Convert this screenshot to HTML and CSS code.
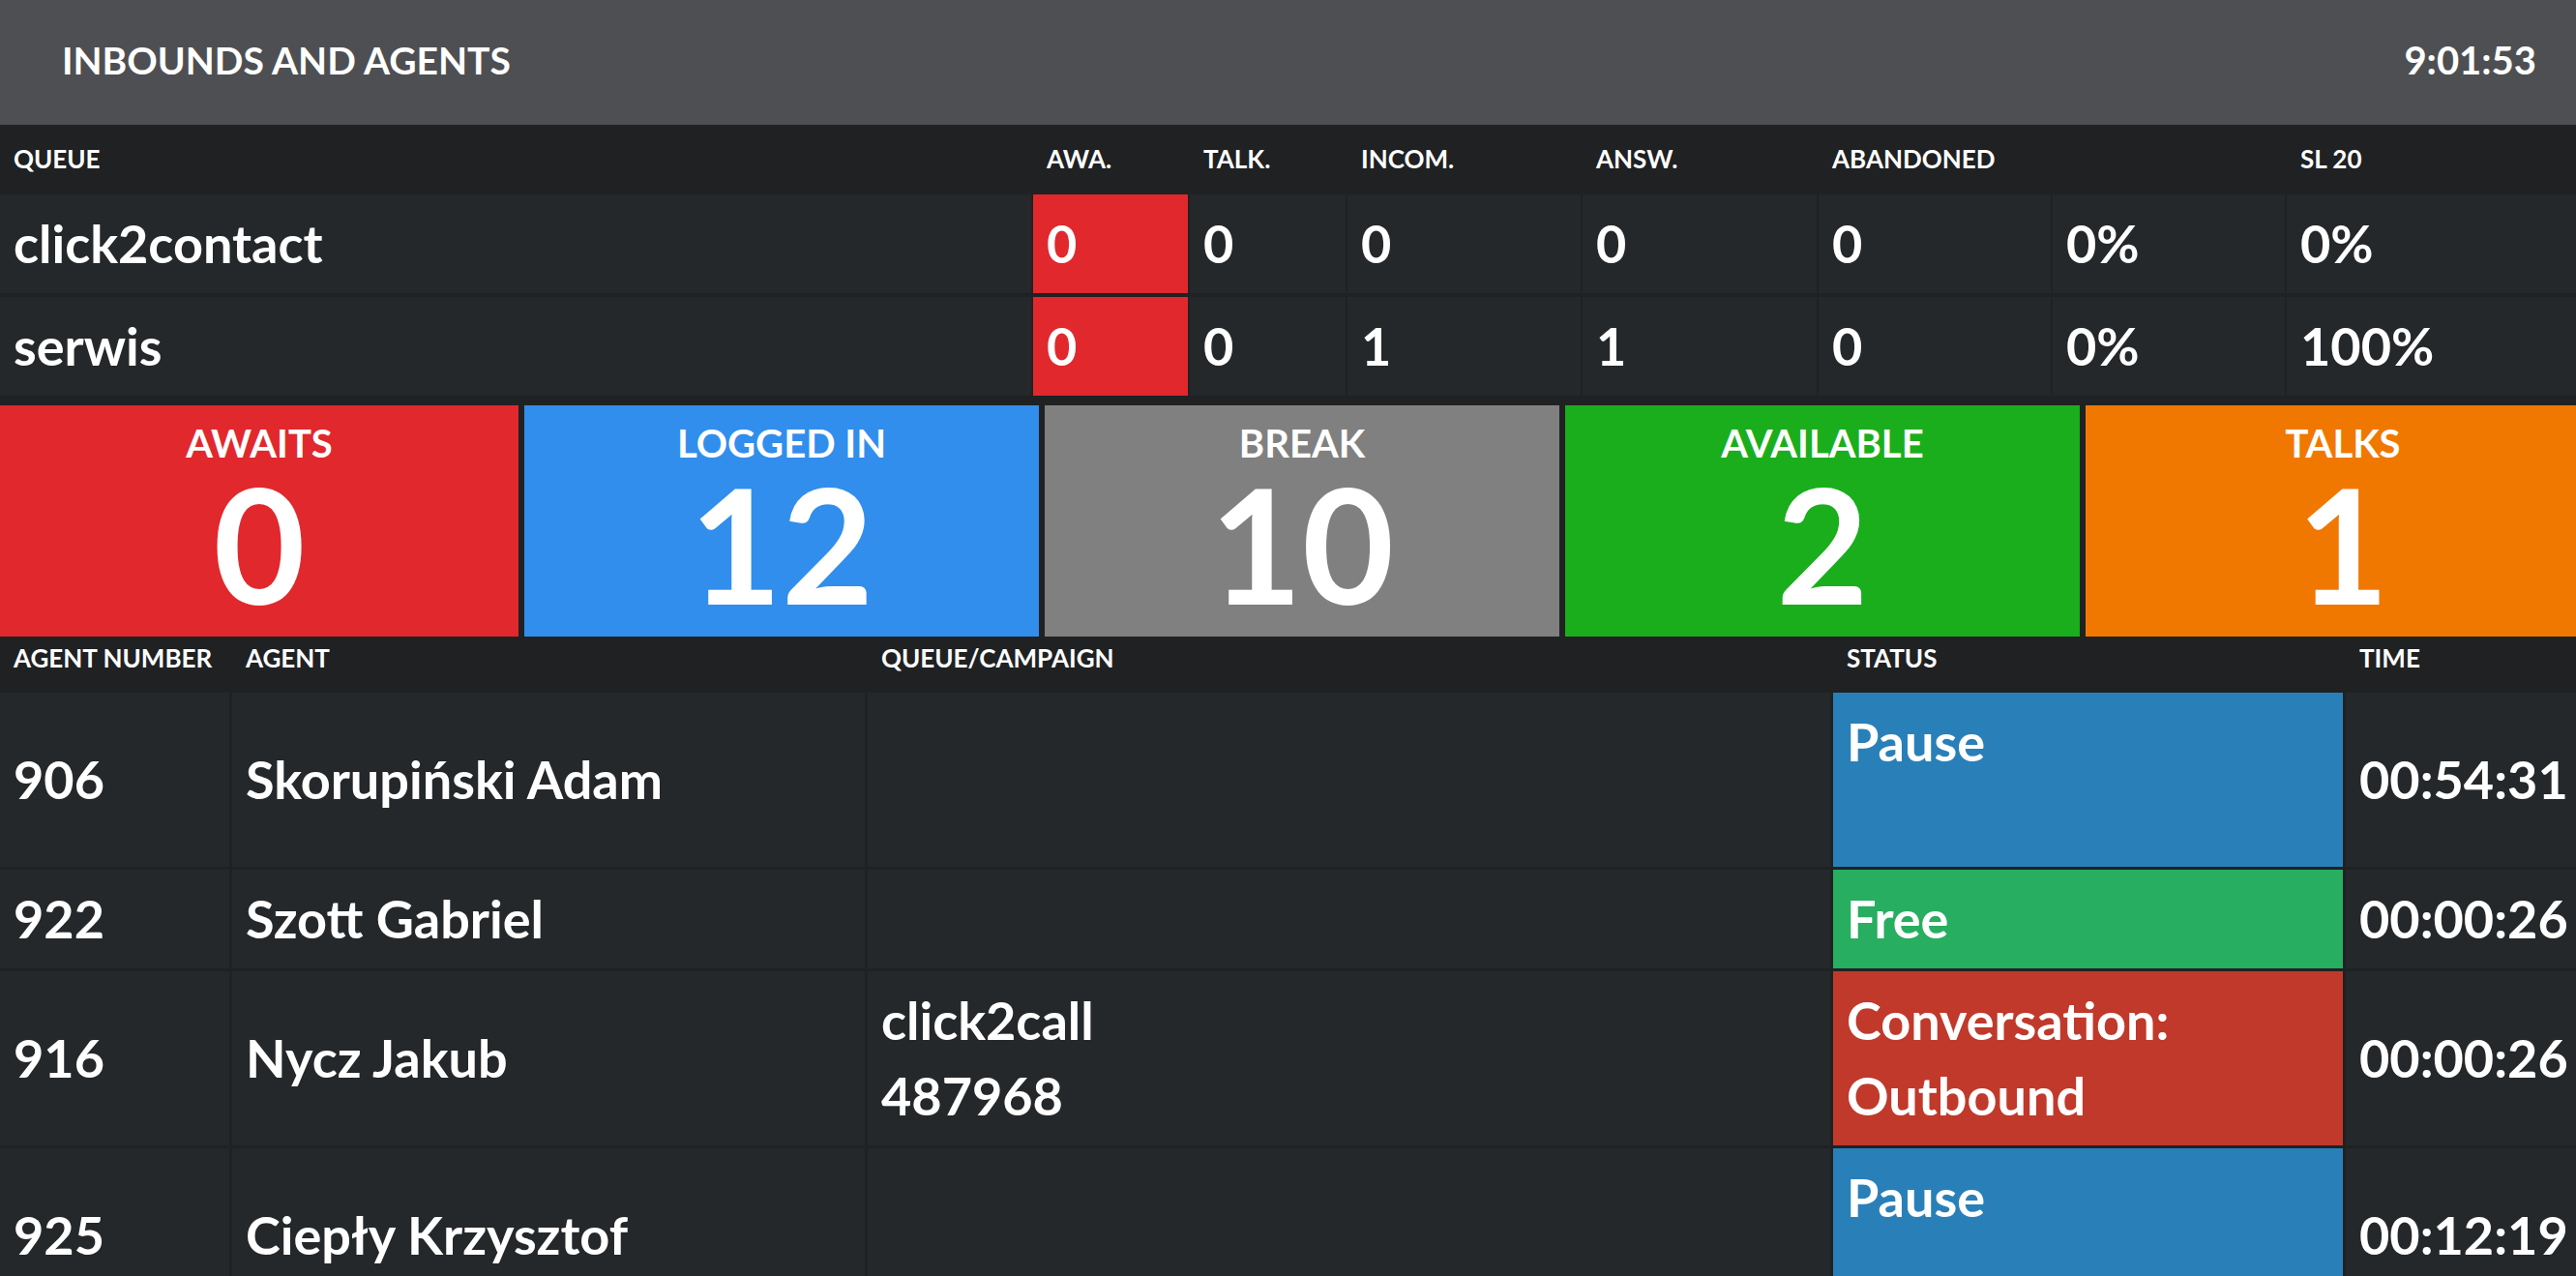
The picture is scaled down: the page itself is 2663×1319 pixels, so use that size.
FILE: index.html
```html
<!DOCTYPE html>
<html lang="en">
<head>
    <meta charset="UTF-8">
    <meta name="viewport" content="width=device-width, initial-scale=1.0">
    <title>Inbounds and Agents</title>
    <link rel="stylesheet" href="styles.css">
</head>
<body>
    <div class="topbar">
        <div class="title">INBOUNDS AND AGENTS</div>
        <div class="clock">9:01:53</div>
    </div>

    <!-- queues -->
    <div class="queue-table">
        <div class="th">QUEUE</div>
        <div class="th">AWA.</div>
        <div class="th">TALK.</div>
        <div class="th">INCOM.</div>
        <div class="th">ANSW.</div>
        <div class="th">ABANDONED</div>
        <div class="th"></div>
        <div class="th">SL 20</div>

        <div class="td">click2contact</div>
        <div class="td alert">0</div>
        <div class="td">0</div>
        <div class="td">0</div>
        <div class="td">0</div>
        <div class="td">0</div>
        <div class="td">0%</div>
        <div class="td">0%</div>

        <div class="td">serwis</div>
        <div class="td alert">0</div>
        <div class="td">0</div>
        <div class="td">1</div>
        <div class="td">1</div>
        <div class="td">0</div>
        <div class="td">0%</div>
        <div class="td">100%</div>
    </div>

    <!-- counters -->
    <div class="counters">
        <div class="counter red">
            <div class="counter-label">AWAITS</div>
            <div class="counter-value">0</div>
        </div>
        <div class="counter blue">
            <div class="counter-label">LOGGED IN</div>
            <div class="counter-value">12</div>
        </div>
        <div class="counter gray">
            <div class="counter-label">BREAK</div>
            <div class="counter-value">10</div>
        </div>
        <div class="counter green">
            <div class="counter-label">AVAILABLE</div>
            <div class="counter-value">2</div>
        </div>
        <div class="counter orange">
            <div class="counter-label">TALKS</div>
            <div class="counter-value">1</div>
        </div>
    </div>

    <!-- agents -->
    <div class="agent-table">
        <div class="th">AGENT NUMBER</div>
        <div class="th">AGENT</div>
        <div class="th">QUEUE/CAMPAIGN</div>
        <div class="th">STATUS</div>
        <div class="th">TIME</div>

        <div class="td mid">906</div>
        <div class="td mid">Skorupiński Adam</div>
        <div class="td"></div>
        <div class="td status pause"><div>Pause</div><div class="reason"></div></div>
        <div class="td mid">00:54:31</div>

        <div class="td mid">922</div>
        <div class="td mid">Szott Gabriel</div>
        <div class="td"></div>
        <div class="td status free"><div>Free</div></div>
        <div class="td mid">00:00:26</div>

        <div class="td mid">916</div>
        <div class="td mid">Nycz Jakub</div>
        <div class="td"><div>click2call</div><div>487968</div></div>
        <div class="td status talk"><div>Conversation:</div><div>Outbound</div></div>
        <div class="td mid">00:00:26</div>

        <div class="td mid">925</div>
        <div class="td mid">Ciepły Krzysztof</div>
        <div class="td"></div>
        <div class="td status pause"><div>Pause</div><div class="reason"></div></div>
        <div class="td mid">00:12:19</div>
    </div>
</body>
</html>
```

FILE: styles.css
```css
body {
    font-family: Lato, "Open Sans", sans-serif;
    font-weight: 700;
    background-color: #1f2123;
    color: white;
    margin: 0;
    padding: 0;
    height: 100vh;
    overflow: hidden;
}

.topbar {
    height: 129px;
    box-sizing: border-box;
    background-color: #4e4f52;
    display: flex;
    align-items: center;
    justify-content: space-between;
    padding: 0 41px 5px 64px;
    font-size: 40px;
    line-height: 48px;
}

.title {
    font-size: 39px;
}

.th {
    font-size: 26px;
    line-height: 31px;
    padding: 0 14px;
    white-space: nowrap;
}

.td {
    background-color: #25282a;
    font-size: 54px;
    line-height: 78px;
    padding: 12px 13px 12px 14px;
    white-space: nowrap;
}

/* queue table */
.queue-table {
    display: grid;
    grid-template-columns: 1066px 160px 161px 241px 242px 240px 240px 1fr;
    column-gap: 2px;
    row-gap: 4px;
    margin-bottom: 10px;
}

.queue-table .th {
    height: 68px;
    padding-top: 20px;
    box-sizing: border-box;
}

.td.alert {
    background-color: #e1282d;
}

/* big counters */
.counters {
    display: grid;
    grid-template-columns: 536px repeat(4, 532px);
    gap: 6px;
}

.counter {
    height: 239px;
    box-sizing: border-box;
    padding-top: 15px;
    text-align: center;
}

.counter-label {
    font-size: 40px;
    line-height: 48px;
}

.counter-value {
    font-size: 164px;
    line-height: 164px;
    margin-top: -2px;
}

.red { background-color: #e1282d; }
.blue { background-color: #318eec; }
.gray { background-color: #808080; }
.green { background-color: #1aae1c; }
.orange { background-color: #f07800; }

/* agents table */
.agent-table {
    display: grid;
    grid-template-columns: 237px 654px 995px 527px 1fr;
    gap: 3px;
}

.agent-table .th {
    height: 55px;
    padding-top: 7px;
    box-sizing: border-box;
}

.td.mid {
    display: flex;
    align-items: center;
}

.reason {
    height: 78px;
}

.status.pause { background-color: #2980b9; }
.status.free { background-color: #27ae60; }
.status.talk { background-color: #c0392b; }
```
